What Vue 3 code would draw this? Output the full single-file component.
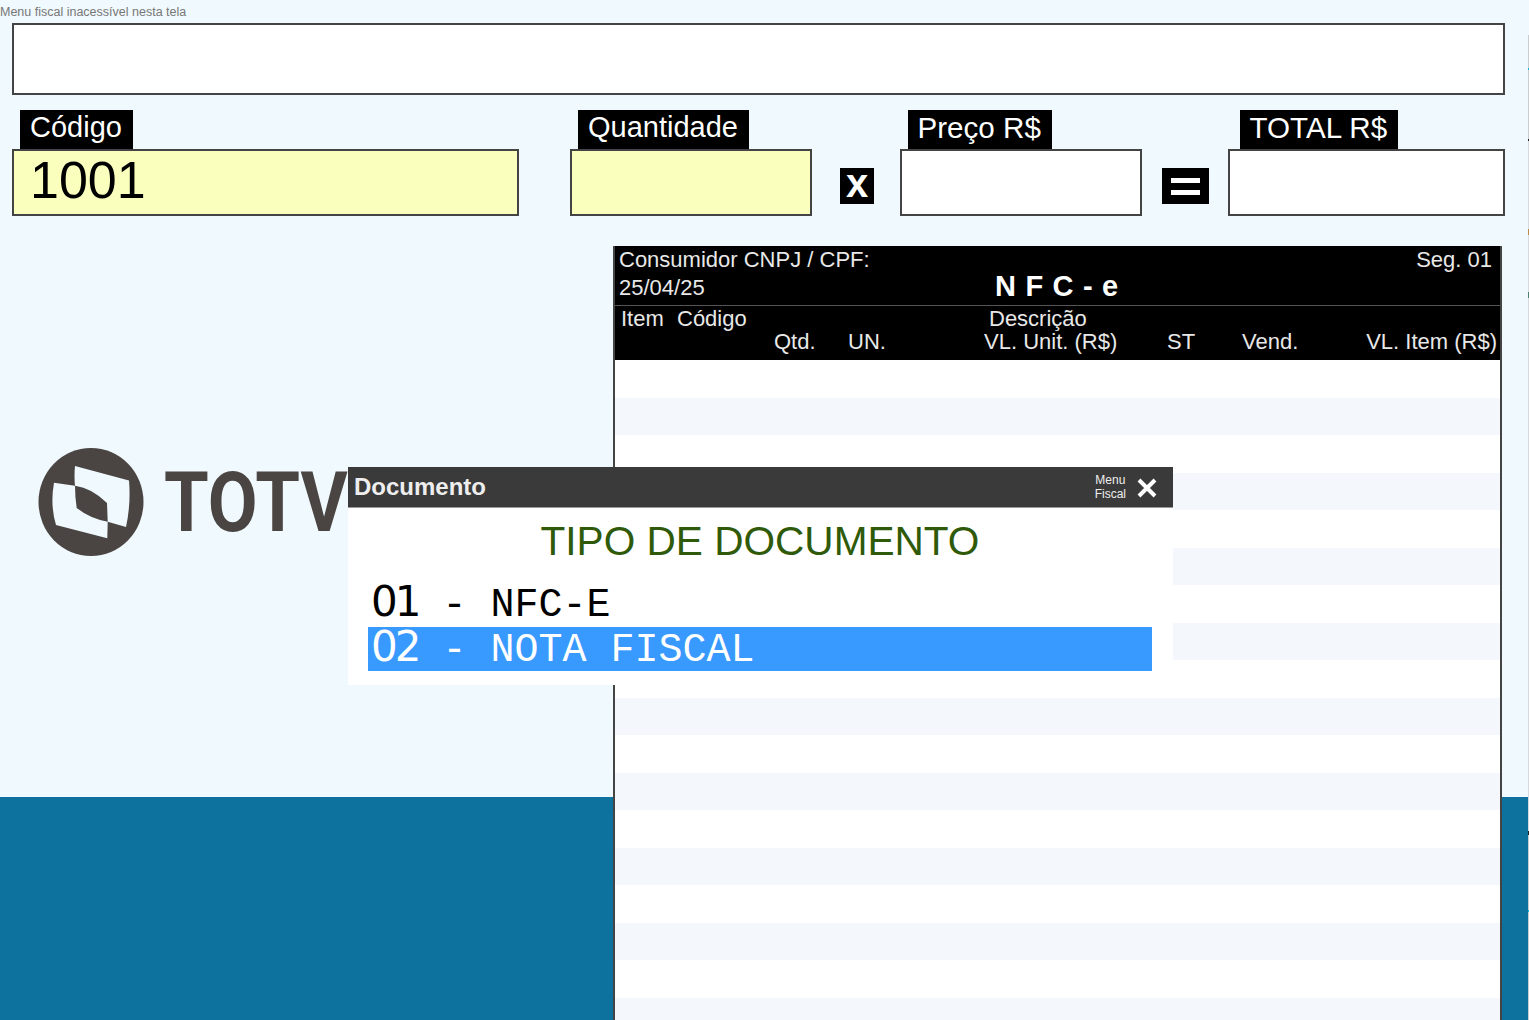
<script setup>
const fields = [
  { label: "Código", value: "1001", width: 507, tab: 8, input: true },
  { label: "Quantidade", value: "", width: 242, tab: 8, input: true, gap: 51 },
  { label: "Preço R$", value: "", width: 242, tab: 8, op: "x", wide: true },
  { label: "TOTAL R$", value: "", width: 277, tab: 12, op: "=", wide: true },
];

const rows = Array.from({ length: 18 }, (_, i) => i);

const docs = [
  { num: "01", name: " - NFC-E" },
  { num: "02", name: " - NOTA FISCAL", active: true },
];
</script>

<template>
  <div class="page">
    <div class="notice">Menu fiscal inacessível nesta tela</div>
    <div class="display"></div>

    <div class="fields">
      <template v-for="f in fields" :key="f.label">
        <div v-if="f.op === 'x'" class="op op-x">x</div>
        <div v-if="f.op === '='" class="op op-eq"><span></span><span></span></div>
        <div class="field" :class="{ spaced: f.gap }" :style="{ width: f.width + 'px' }">
          <div class="tab" :class="{ wide: f.wide }" :style="{ marginLeft: f.tab + 'px' }">{{ f.label }}</div>
          <div class="box" :class="{ yellow: f.input }">{{ f.value }}</div>
        </div>
      </template>
    </div>

    <div class="content">
      <div class="logo">
        <svg class="logo-icon" viewBox="38 448 106 109" width="106" height="109">
          <ellipse cx="91" cy="502" rx="52.5" ry="54" fill="#4a4543" />
          <path d="M75 466 L129 480.5 Q131 504 126 527 L107.7 521.7 L107 503 Q92 488 75 485.7 Q74 476 75 466 Z" fill="#f0f9fd" />
          <path d="M54 482.7 L75 485.7 Q75 497 76.7 508 Q90 518.5 107.7 521.7 L107.3 538.3 L56 525 Q50 505 54 482.7 Z" fill="#f0f9fd" />
        </svg>
        <span class="logo-text">TOTVS</span>
      </div>

      <div class="coupon">
        <div class="coupon-head">
          <div class="line-top">
            <span>Consumidor CNPJ / CPF:</span>
            <span class="seg">Seg. 01</span>
          </div>
          <div class="line-date">
            <span>25/04/25</span>
            <b class="nfce">N F C - e</b>
          </div>
          <div class="line-item">
            <span>Item</span>
            <span>Código</span>
            <span>Descrição</span>
          </div>
          <div class="line-values">
            <span>Qtd.</span>
            <span>UN.</span>
            <span>VL. Unit. (R$)</span>
            <span>ST</span>
            <span>Vend.</span>
            <span class="right">VL. Item (R$)</span>
          </div>
        </div>
        <div v-for="r in rows" :key="r" class="row" :class="{ alt: r % 2 === 1 }"></div>
      </div>
    </div>

    <div class="edge"></div>

    <div class="modal">
      <div class="modal-head">
        <span class="modal-title">Documento</span>
        <span class="menu-fiscal">Menu<br />Fiscal</span>
        <svg class="close" viewBox="0 0 20 20" width="20" height="20">
          <path d="M2 2 L18 18 M18 2 L2 18" stroke="#fff" stroke-width="4" fill="none" />
        </svg>
      </div>
      <div class="modal-body">
        <h1>TIPO DE DOCUMENTO</h1>
        <div v-for="d in docs" :key="d.num" class="doc" :class="{ active: d.active }">
          <span class="num">{{ d.num }}</span><span class="name">{{ d.name }}</span>
        </div>
      </div>
    </div>
  </div>
</template>

<style>
html,
body {
  margin: 0;
  overflow: hidden;
}
</style>

<style scoped>
.page {
  position: relative;
  width: 1529px;
  height: 1020px;
  overflow: hidden;
  font-family: "Liberation Sans", Arial, sans-serif;
  background: linear-gradient(#f0f9fd 0 797px, #0e729f 797px);
}

.notice {
  height: 23px;
  line-height: 24px;
  font-size: 12.5px;
  color: #777;
  white-space: nowrap;
}

.display {
  box-sizing: border-box;
  width: 1493px;
  height: 72px;
  margin-left: 12px;
  background: #fff;
  border: 2px solid #444;
}

.fields {
  display: flex;
  margin: 15px 0 0 12px;
}

.field.spaced {
  margin-left: 51px;
}

.tab {
  width: fit-content;
  height: 39px;
  line-height: 35px;
  padding: 0 11px 0 10px;
  font-size: 29px;
  color: #fff;
  background: #000;
}

.tab.wide {
  font-size: 29.6px;
  padding-left: 9.5px;
}

.box {
  box-sizing: border-box;
  height: 67px;
  line-height: 59px;
  padding-left: 16px;
  font-size: 52px;
  color: #000;
  background: #fff;
  border: 2px solid #444;
}

.box.yellow {
  background: #fbffbe;
}

.op {
  align-self: flex-end;
  height: 36px;
  margin-bottom: 12px;
  background: #000;
  color: #fff;
}

.op-x {
  width: 34px;
  margin: 0 26px 12px 28px;
  font-size: 40px;
  font-weight: 700;
  line-height: 31px;
  text-align: center;
}

.op-eq {
  width: 47px;
  margin: 0 19px 12px 20px;
  display: flex;
  flex-direction: column;
  justify-content: center;
  align-items: center;
  gap: 7px;
}

.op-eq span {
  width: 29px;
  height: 5px;
  background: #fff;
}

.content {
  display: flex;
  margin-top: 30px;
}

.logo {
  display: flex;
  align-items: center;
  height: 109px;
  margin: 202px 0 0 38px;
  white-space: nowrap;
}

.logo-icon {
  flex: none;
}

.logo-text {
  margin-left: 20px;
  font-family: Roboto, sans-serif;
  font-size: 84px;
  font-weight: 700;
  color: #4a4543;
  transform: scaleX(0.86);
  transform-origin: left center;
}

.coupon {
  box-sizing: border-box;
  flex: none;
  width: 889px;
  height: 774px;
  margin: 0 27px 0 auto;
  background: #fff;
  border-left: 2px solid #444;
  border-right: 2px solid #444;
  overflow: hidden;
}

.coupon-head {
  height: 114px;
  margin: 0 -2px;
  font-size: 22px;
  color: #e8e8e8;
  background: #000;
}

.line-top {
  display: flex;
  justify-content: space-between;
  padding: 0 10px 0 6px;
  height: 28px;
  line-height: 27px;
}

.line-date {
  position: relative;
  height: 31px;
  padding-left: 6px;
  line-height: 27px;
  border-bottom: 1px solid #555;
}

.nfce {
  position: absolute;
  left: 382px;
  top: -1px;
  font-size: 29px;
  letter-spacing: 0.7px;
  color: #fff;
}

.line-item {
  display: grid;
  grid-template-columns: 56px 312px 1fr;
  height: 25px;
  line-height: 25px;
  padding-left: 8px;
}

.line-values {
  display: grid;
  grid-template-columns: 74px 136px 183px 75px 124px 1fr;
  padding: 0 5px 0 161px;
  line-height: 22px;
}

.right {
  justify-self: end;
  white-space: nowrap;
}

.row {
  height: 37.5px;
}

.row.alt {
  background: #f4f8fc;
}

/* streak left by the window behind, on the last column of pixels */
.edge {
  position: absolute;
  right: 0;
  top: 35px;
  width: 1px;
  height: 985px;
  background: linear-gradient(
    #c9cdd0 0 33px,
    #19b5d0 33px 35px,
    #c9cdd0 35px 104px,
    #222 104px 106px,
    #d6dade 106px 194px,
    #b98a4a 194px 200px,
    #d6dade 200px 257px,
    #4f7f70 257px 263px,
    #d6dade 263px 796px,
    #222 796px 800px,
    #c9cdd0 800px 875px,
    #19b5d0 875px 877px,
    #c9cdd0 877px
  );
}

.modal {
  position: absolute;
  left: 348px;
  top: 467px;
  width: 825px;
  height: 218px;
  background: #fff;
}

.modal-head {
  position: relative;
  box-sizing: border-box;
  display: flex;
  align-items: center;
  height: 41px;
  padding-left: 6px;
  background: #3a3a3a;
  border-bottom: 1px solid #999;
  color: #eee;
}

.modal-title {
  font-size: 24px;
  font-weight: 700;
}

.menu-fiscal {
  margin-left: auto;
  margin-right: 47px;
  font-size: 12px;
  line-height: 14px;
  text-align: center;
}

.close {
  position: absolute;
  left: 789px;
  top: 11px;
}

.modal-body {
  padding: 0 21px 0 20px;
}

h1 {
  margin: 0;
  height: 74px;
  line-height: 67px;
  font-size: 40.6px;
  font-weight: 400;
  text-align: center;
  color: #2f5a0a;
}

.doc {
  height: 45px;
  line-height: 40px;
  padding-left: 3px;
  color: #000;
  white-space: pre;
}

.doc.active {
  height: 44px;
  background: #3899ff;
  color: #fff;
}

.num {
  font-family: "DejaVu Sans", sans-serif;
  font-size: 42px;
  letter-spacing: -3px;
}

.name {
  font-family: "Liberation Mono", monospace;
  font-size: 40px;
}
</style>
